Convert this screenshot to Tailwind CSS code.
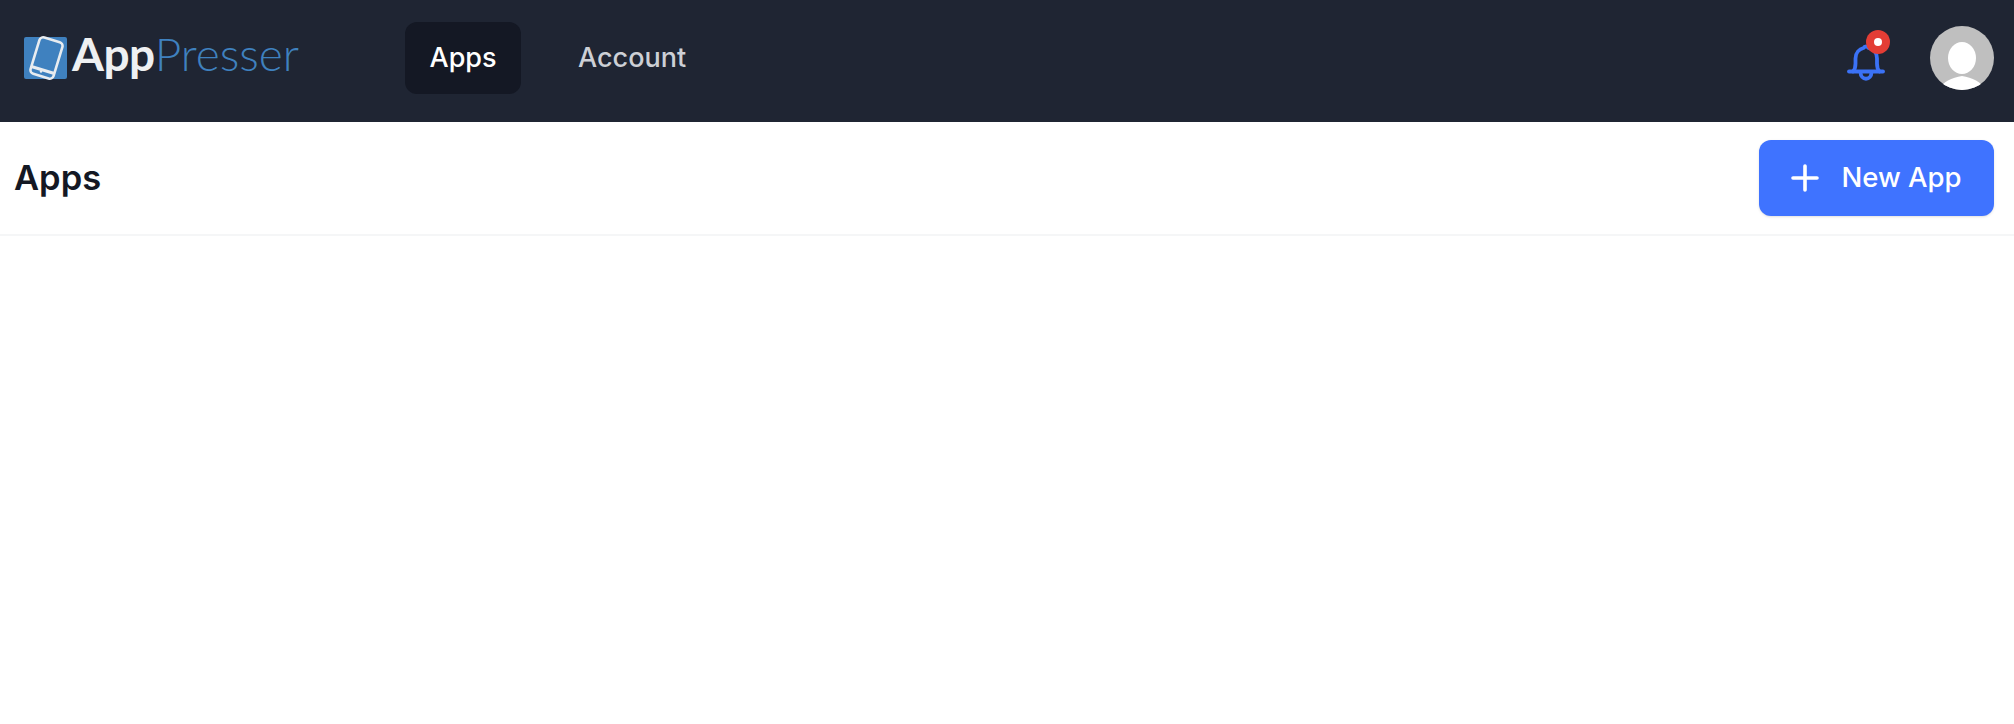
<!DOCTYPE html>
<html lang="en">
<head>
    <meta charset="UTF-8">
    <meta name="viewport" content="width=device-width, initial-scale=1.0">
    <title>Apps - AppPresser</title>
    <script src="https://cdn.jsdelivr.net/npm/@tailwindcss/browser@4"></script>
</head>
<body class="bg-white font-['Inter',sans-serif]">
    <!-- Top nav -->
    <nav class="h-[122px] bg-[#1f2533] flex items-center pl-6 pr-5 pb-[6px]">
        <div class="w-[381px] flex items-center">
            <svg class="w-[43px] h-[44px] shrink-0" viewBox="0 0 43 44">
                <rect y="1" width="43" height="42" rx="2" fill="#3f81bf"/>
                <g transform="rotate(17 22.500 22)" fill="none" stroke="#e8ecf0" stroke-width="2.600">
                    <rect x="10.500" y="3" width="24" height="38" rx="4"/>
                    <path d="M10.500 34.500h24" stroke-width="3"/>
                </g>
                <circle cx="17" cy="35.500" r="1.200" fill="#e8ecf0"/>
            </svg>
            <div class="ml-[5px] mb-[8px] flex items-baseline font-['Lato',sans-serif] text-[46px] leading-none">
                <span class="font-bold text-[#eef0f2] tracking-[-0.5px]">App</span><span class="font-light text-[#3f81bf]">Presser</span>
            </div>
        </div>
        <div class="flex items-center gap-[32px]">
            <a class="h-[72px] px-[24.500px] flex items-center rounded-xl bg-[#141824] text-white text-[27px] font-medium">Apps</a>
            <a class="h-[72px] px-[25px] flex items-center rounded-xl text-[#cdd0d6] text-[27px] font-medium">Account</a>
        </div>
        <div class="ml-auto flex items-center gap-[44px]">
            <div class="relative w-[40px] h-[44px] mt-[8px]">
                <svg class="w-[40px] h-[44px]" viewBox="0 0 40 44" fill="none" stroke="#3b72f6" stroke-width="3.800" stroke-linecap="round" stroke-linejoin="round">
                    <path d="M3 31.500h34"/>
                    <path d="M7 31.500c2-2 2.500-4 2.500-8v-5c0-6 4-9.500 8-10.500 1-2 4-2 5 0 5 1 8.500 5 8.500 10.500v5c0 4 .5 6 2.500 8"/>
                    <path d="M14.500 32c0 9 11 9 11 0"/>
                </svg>
                <span class="absolute left-[20px] top-[-10px] w-6 h-6 rounded-full bg-[#e33d35] flex items-center justify-center">
                    <span class="w-2 h-2 rounded-full bg-white"></span>
                </span>
            </div>
            <svg class="w-[64px] h-[64px] rounded-full" viewBox="0 0 64 64">
                <rect width="64" height="64" fill="#bfbfbf"/>
                <ellipse cx="32" cy="32" rx="14" ry="16" fill="#fff"/>
                <path d="M10 64c2-9 12-12 22-14 10 2 20 5 22 14z" fill="#fff"/>
            </svg>
        </div>
    </nav>

    <!-- Page header -->
    <header class="h-[114px] pl-[14px] pr-5 flex items-center justify-between bg-white border-b-2 border-[#f5f6f7]">
        <h1 class="text-[34.500px] font-semibold text-[#141824]">Apps</h1>
        <button class="w-[235px] h-[76px] rounded-xl bg-[#3f73ff] text-white text-[27.500px] font-medium flex items-center justify-center gap-[22px] shadow-sm">
            <svg class="w-7 h-7" viewBox="0 0 28 28" fill="none" stroke="#fff" stroke-width="3.600" stroke-linecap="round"><path d="M14 2v24M2 14h24"/></svg>
            New App
        </button>
    </header>
</body>
</html>
